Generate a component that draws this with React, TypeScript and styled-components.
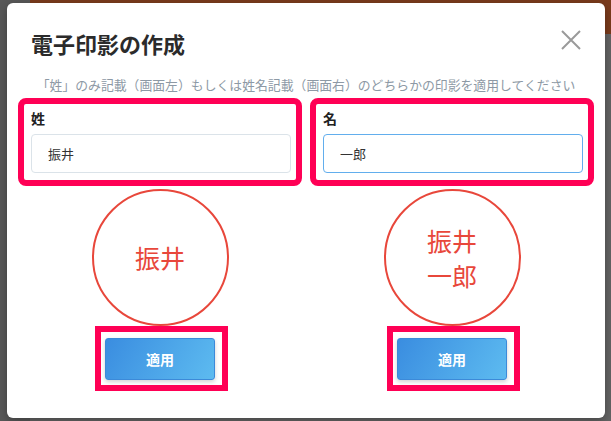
import styled, { createGlobalStyle } from 'styled-components';

const GlobalStyle = createGlobalStyle`
  html, body {
    margin: 0;
    padding: 0;
    width: 611px;
    height: 421px;
    overflow: hidden;
    font-family: 'Noto Sans CJK JP', 'Noto Sans', sans-serif;
  }
`;

const Screen = styled.div`
  position: relative;
  width: 611px;
  height: 421px;
  overflow: hidden;
  display: flex;
  background: #c9c9c9;
`;

const SideBar = styled.div`
  width: 30px;
  background: #b0b0b0;
`;

const PageMain = styled.div`
  flex: 1;
  display: flex;
  flex-direction: column;
`;

const AlertBar = styled.div`
  height: 34px;
  background: #f47638;
  color: #fff;
  font-size: 13px;
  line-height: 20px;
  padding: 0 0 0 40px;
`;

const Overlay = styled.div`
  position: absolute;
  inset: 0;
  background: rgba(0, 0, 0, 0.5);
  display: flex;
  align-items: flex-start;
`;

const Modal = styled.div`
  margin: 3px 0 0 7px;
  width: 598px;
  height: 415px;
  background: #fff;
  border-radius: 6px;
  box-shadow: 0 3px 10px rgba(0, 0, 0, 0.3);
  display: flex;
  flex-direction: column;
`;

const Header = styled.div`
  display: flex;
  justify-content: space-between;
  align-items: flex-start;
  padding: 24px 24px 0 24px;
`;

const Title = styled.h2`
  margin: 0;
  font-size: 22px;
  line-height: 32px;
  font-weight: 700;
  color: #2b2b2b;
`;

const CloseButton = styled.button`
  margin-top: 3px;
  padding: 0;
  border: none;
  background: none;
  width: 20px;
  height: 20px;
  cursor: pointer;
  display: flex;
`;

const Lead = styled.p`
  margin: 17px 0 0;
  text-align: center;
  font-size: 12.85px;
  line-height: 18px;
  color: #8d99a5;
`;

const Columns = styled.div`
  display: grid;
  grid-template-columns: 1fr 1fr;
  column-gap: 8px;
  padding: 4px 11px 0;
`;

const Column = styled.div`
  display: flex;
  flex-direction: column;
  align-items: center;
`;

const FieldBox = styled.div`
  align-self: stretch;
  border: 6px solid #ff0055;
  border-radius: 8px;
  padding: 3px 5px 7px 7px;
  display: flex;
  flex-direction: column;
`;

const Label = styled.label`
  font-size: 14px;
  line-height: 22px;
  font-weight: 700;
  color: #222;
`;

const Input = styled.input<{ $focused?: boolean }>`
  margin-top: 5px;
  height: 39px;
  box-sizing: border-box;
  border: 1px solid ${(p) => (p.$focused ? '#62aeed' : '#dbe3e9')};
  border-radius: 4px;
  padding: 0 0 0 16px;
  font-family: inherit;
  font-size: 13px;
  color: #333;
  outline: none;
  background: #fff;
`;

const Stamp = styled.div`
  margin-top: 3px;
  width: 137px;
  height: 137px;
  box-sizing: border-box;
  border: 2px solid #e8473b;
  border-radius: 50%;
  display: flex;
  align-items: center;
  justify-content: center;
  text-align: center;
  color: #e8473b;
  font-size: 25px;
  line-height: 35px;
  white-space: pre-line;
`;

const ButtonBox = styled.div`
  border: 6px solid #ff0055;
  padding: 6px 7px 5px 4px;
  margin-left: 3px;
`;

const ApplyButton = styled.button`
  display: block;
  width: 110px;
  height: 42px;
  border: 1px solid #3c8ad9;
  border-radius: 3px;
  background: linear-gradient(120deg, #3a8de0 0%, #5dbbf0 100%);
  box-shadow: 0 2px 4px rgba(0, 0, 0, 0.18);
  color: #fff;
  font-family: inherit;
  font-size: 14px;
  font-weight: 700;
  cursor: pointer;
`;

const CloseIcon = () => (
  <svg width="20" height="20" viewBox="0 0 20 20">
    <path d="M1 1 L19 19 M19 1 L1 19" stroke="#9a9a9a" strokeWidth="2" fill="none" />
  </svg>
);

const stamps = [
  { label: '姓', value: '振井', stamp: '振井', focused: false },
  { label: '名', value: '一郎', stamp: '振井\n一郎', focused: true },
];

const App = () => {
  return (
    <>
      <GlobalStyle />
      <Screen>
        <SideBar />
        <PageMain>
          <AlertBar>請求書を作成するには請求書側の登録が必要です</AlertBar>
        </PageMain>
        <Overlay>
          <Modal>
            <Header>
              <Title>電子印影の作成</Title>
              <CloseButton aria-label="閉じる">
                <CloseIcon />
              </CloseButton>
            </Header>
            <Lead>
              「姓」のみ記載（画面左）もしくは姓名記載（画面右）のどちらかの印影を適用してください
            </Lead>
            <Columns>
              {stamps.map((item) => (
                <Column key={item.label}>
                  <FieldBox>
                    <Label>{item.label}</Label>
                    <Input defaultValue={item.value} $focused={item.focused} />
                  </FieldBox>
                  <Stamp>{item.stamp}</Stamp>
                  <ButtonBox>
                    <ApplyButton>適用</ApplyButton>
                  </ButtonBox>
                </Column>
              ))}
            </Columns>
          </Modal>
        </Overlay>
      </Screen>
    </>
  );
};

export default App;
